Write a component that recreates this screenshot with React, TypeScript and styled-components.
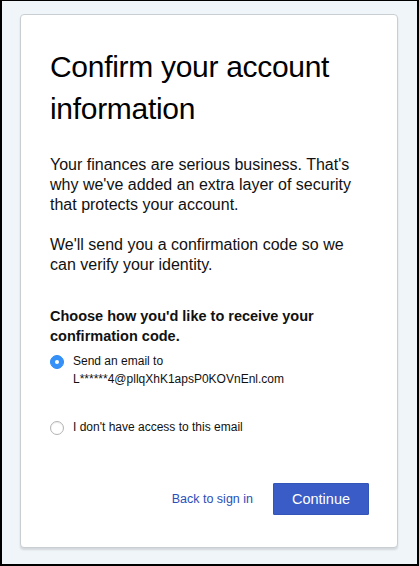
import React, { useState } from "react";
import styled, { createGlobalStyle } from "styled-components";

const GlobalStyle = createGlobalStyle`
  html, body {
    margin: 0;
    padding: 0;
    background: #000;
  }
  * {
    box-sizing: border-box;
  }
`;

const options = [
  { id: "email", label: "Send an email to", detail: "L******4@pllqXhK1apsP0KOVnEnl.com" },
  { id: "none", label: "I don't have access to this email" },
];

const App = () => {
  const [choice, setChoice] = useState("email");

  return (
    <Page>
      <GlobalStyle />
      <Card>
        <Title>Confirm your account information</Title>
        <Text>
          Your finances are serious business. That's why we've added an extra
          layer of security that protects your account.
        </Text>
        <Text>
          We'll send you a confirmation code so we can verify your identity.
        </Text>
        <Fieldset>
          <Legend>Choose how you'd like to receive your confirmation code.</Legend>
          <Options>
            {options.map((o) => (
              <Option key={o.id}>
                <Radio
                  type="radio"
                  name="method"
                  checked={choice === o.id}
                  onChange={() => setChoice(o.id)}
                />
                <OptionText>
                  {o.label}
                  {o.detail && <br />}
                  {o.detail}
                </OptionText>
              </Option>
            ))}
          </Options>
        </Fieldset>
        <Actions>
          <BackLink href="#">Back to sign in</BackLink>
          <Button type="button">Continue</Button>
        </Actions>
      </Card>
    </Page>
  );
};

const Page = styled.div`
  height: 566px;
  border: 2px solid #000;
  border-top-width: 1px;
  background: #f0f5fa;
  padding: 13px 19px 0 18px;
  font-family: "Liberation Sans", Arial, sans-serif;
  color: #111;
`;

const Card = styled.div`
  width: 378px;
  height: 534px;
  background: #fff;
  border: 1px solid #c9ced3;
  border-radius: 4px;
  box-shadow: 0 2px 2px rgba(0, 0, 0, 0.12);
  padding: 31px 28px 0 29px;
`;

const Title = styled.h1`
  margin: 0 0 25px;
  font-size: 30px;
  font-weight: normal;
  line-height: 42px;
  letter-spacing: -0.3px;
  color: #000;
`;

const Text = styled.p`
  margin: 0 0 20px;
  font-size: 16px;
  line-height: 20px;
  color: #111;
`;

const Fieldset = styled.fieldset`
  margin: 31px 0 0;
  padding: 0;
  border: none;
`;

const Legend = styled.legend`
  padding: 0;
  margin: 0 0 6px;
  font-size: 14.5px;
  font-weight: bold;
  line-height: 20px;
  color: #111;
`;

const Options = styled.div`
  display: flex;
  flex-direction: column;
  gap: 30px;
`;

const Option = styled.label`
  display: flex;
  align-items: flex-start;
  gap: 9px;
  font-size: 12px;
  line-height: 18px;
  cursor: pointer;
`;

const Radio = styled.input`
  appearance: none;
  flex: none;
  width: 14px;
  height: 14px;
  margin: 3px 0 0;
  border-radius: 50%;
  border: 1px solid #b3b3b3;
  background: #fff;
  box-shadow: inset 0 1px 1px rgba(0, 0, 0, 0.08);
  display: grid;
  place-items: center;

  &:checked {
    border-color: #2f8cf6;
    background: #3591f7;
    box-shadow: none;
  }
  &:checked::after {
    content: "";
    width: 4px;
    height: 4px;
    border-radius: 50%;
    background: #fff;
  }
`;

const OptionText = styled.span`
  color: #111;
`;

const Actions = styled.div`
  display: flex;
  justify-content: flex-end;
  align-items: center;
  gap: 20px;
  margin-top: 47px;
`;

const BackLink = styled.a`
  font-size: 12.5px;
  color: #2b4fb8;
  text-decoration: none;
`;

const Button = styled.button`
  width: 96px;
  height: 32px;
  border: 1px solid #3354b8;
  border-radius: 1px;
  background: #3a5cc6;
  color: #fff;
  font-family: "Liberation Sans", Arial, sans-serif;
  font-size: 14.5px;
  cursor: pointer;
`;

export default App;
